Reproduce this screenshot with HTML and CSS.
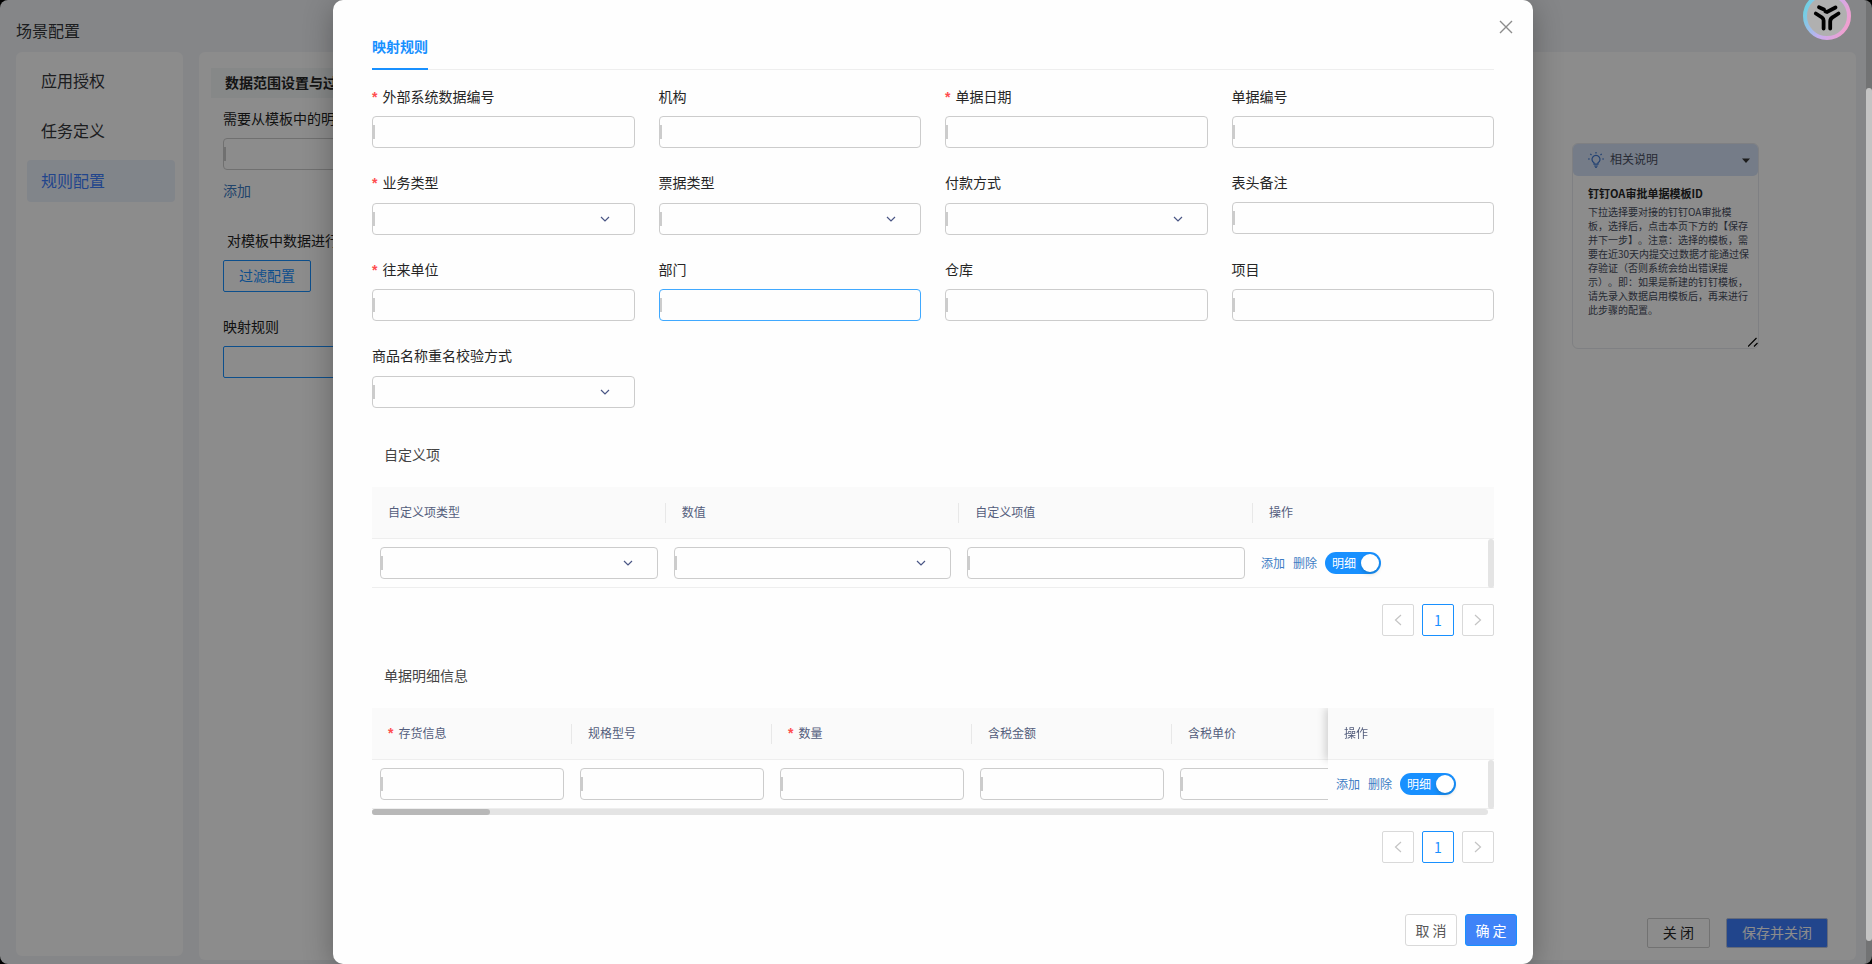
FILE: index.html
```html
<!DOCTYPE html>
<html lang="zh-CN">
<head>
<meta charset="utf-8">
<title>场景配置</title>
<link rel="stylesheet" href="styles.css">
</head>
<body>
<svg class="sprite" aria-hidden="true">
  <symbol id="down" viewBox="0 0 10 6"><path d="M1 1l4 4 4-4" fill="none" stroke="currentColor" stroke-width="1.2"/></symbol>
  <symbol id="prev" viewBox="0 0 8 12"><path d="M7 1L1.500 6 7 11" fill="none" stroke="currentColor" stroke-width="1.200"/></symbol>
  <symbol id="next" viewBox="0 0 8 12"><path d="M1 1l5.500 5L1 11" fill="none" stroke="currentColor" stroke-width="1.200"/></symbol>
</svg>

<div class="page">
  <header class="page-title">场景配置</header>
  <div class="columns">
    <nav class="sidebar">
      <a class="nav-item" href="#auth">应用授权</a>
      <a class="nav-item" href="#task">任务定义</a>
      <a class="nav-item active" href="#rule">规则配置</a>
    </nav>
    <main class="content">
      <div class="content-body">
        <section class="settings">
          <h2 class="band">数据范围设置与过</h2>
          <div class="settings-body">
            <label class="line-label" for="detail">需要从模板中的明</label>
            <input class="field" id="detail" type="text">
            <a class="link add" href="#add">添加</a>
            <p class="line-label filter-label">对模板中数据进行</p>
            <button class="outline-btn" type="button">过滤配置</button>
            <label class="line-label map-label" for="mapping">映射规则</label>
            <input class="field plain" id="mapping" type="text">
          </div>
        </section>
        <aside class="help">
          <button class="help-head" type="button">
            <svg class="bulb" viewBox="0 0 16 16" fill="none" stroke="currentColor" stroke-width="1.200"><path d="M6 12.200v-1.400a4 4 0 1 1 4 0v1.400zM6.200 14h3.600M7.200 15.300h1.600M8 0v1.500M0 7h1.800M14.200 7H16M2.300 1.800l1.200 1.200M13.700 1.800L12.500 3"/></svg>
            <span>相关说明</span>
            <svg class="caret" viewBox="0 0 8 5"><path d="M0 .5h8L4 5z" fill="currentColor"/></svg>
          </button>
          <div class="help-body">
            <h3 class="help-title">钉钉OA审批单据模板ID</h3>
            <p class="help-text">下拉选择要对接的钉钉OA审批模板，选择后，点击本页下方的【保存并下一步】。注意：选择的模板，需要在近30天内提交过数据才能通过保存验证（否则系统会给出错误提示）。即：如果是新建的钉钉模板，请先录入数据启用模板后，再来进行此步骤的配置。</p>
          </div>
          <svg class="grip" viewBox="0 0 10 10"><path d="M0 9.500L8.500 1M6 9.500L9.500 6" stroke="#000" stroke-width="1.200"/></svg>
        </aside>
      </div>
      <footer class="content-foot">
        <button class="page-btn" type="button">关 闭</button>
        <button class="page-btn save" type="button">保存并关闭</button>
      </footer>
    </main>
  </div>
</div>

<div class="overlay">
  <div class="modal" role="dialog" aria-label="映射规则">
    <button class="close" type="button" aria-label="关闭"><svg viewBox="0 0 14 14"><path d="M1 1l12 12M13 1L1 13" stroke="currentColor" stroke-width="1.400"/></svg></button>
    <div class="modal-body">
      <div class="tabs"><button class="tab" type="button">映射规则</button></div>

      <form class="form">
        <div class="item"><label class="req" for="f1">外部系统数据编号</label><input class="field" id="f1" type="text"></div>
        <div class="item"><label for="f2">机构</label><input class="field" id="f2" type="text"></div>
        <div class="item"><label class="req" for="f3">单据日期</label><input class="field" id="f3" type="text"></div>
        <div class="item"><label for="f4">单据编号</label><input class="field" id="f4" type="text"></div>
        <div class="item"><label class="req" for="f5">业务类型</label><div class="pick"><select class="field" id="f5"></select><svg class="down"><use href="#down"/></svg></div></div>
        <div class="item"><label for="f6">票据类型</label><div class="pick"><select class="field" id="f6"></select><svg class="down"><use href="#down"/></svg></div></div>
        <div class="item"><label for="f7">付款方式</label><div class="pick"><select class="field" id="f7"></select><svg class="down"><use href="#down"/></svg></div></div>
        <div class="item"><label for="f8">表头备注</label><input class="field" id="f8" type="text"></div>
        <div class="item"><label class="req" for="f9">往来单位</label><input class="field" id="f9" type="text"></div>
        <div class="item"><label for="f10">部门</label><input class="field current" id="f10" type="text"></div>
        <div class="item"><label for="f11">仓库</label><input class="field" id="f11" type="text"></div>
        <div class="item"><label for="f12">项目</label><input class="field" id="f12" type="text"></div>
        <div class="item"><label for="f13">商品名称重名校验方式</label><div class="pick"><select class="field" id="f13"></select><svg class="down"><use href="#down"/></svg></div></div>
      </form>

      <h3 class="section-title">自定义项</h3>
      <div class="table-wrap">
        <table class="grid custom">
          <colgroup><col><col><col><col class="col-custom-op"></colgroup>
          <thead><tr><th>自定义项类型</th><th>数值</th><th>自定义项值</th><th>操作</th></tr></thead>
          <tbody><tr>
            <td><div class="pick"><select class="field" aria-label="自定义项类型"></select><svg class="down"><use href="#down"/></svg></div></td>
            <td><div class="pick"><select class="field" aria-label="数值"></select><svg class="down"><use href="#down"/></svg></div></td>
            <td><input class="field" type="text" aria-label="自定义项值"></td>
            <td><div class="ops"><a class="link" href="#add">添加</a><a class="link" href="#del">删除</a><label class="switch">明细<input type="checkbox" role="switch" checked></label></div></td>
          </tr></tbody>
        </table>
        <div class="v-bar"></div>
      </div>
      <div class="pager">
        <button type="button" disabled aria-label="上一页"><svg><use href="#prev"/></svg></button>
        <button type="button" class="on">1</button>
        <button type="button" disabled aria-label="下一页"><svg><use href="#next"/></svg></button>
      </div>

      <h3 class="section-title detail-title">单据明细信息</h3>
      <div class="table-wrap">
        <table class="grid detail">
          <colgroup><col><col><col><col><col><col class="col-detail-op"></colgroup>
          <thead><tr><th><span class="req">存货信息</span></th><th>规格型号</th><th><span class="req">数量</span></th><th>含税金额</th><th>含税单价</th><th class="pinned">操作</th></tr></thead>
          <tbody><tr>
            <td><input class="field" type="text" aria-label="存货信息"></td>
            <td><input class="field" type="text" aria-label="规格型号"></td>
            <td><input class="field" type="text" aria-label="数量"></td>
            <td><input class="field" type="text" aria-label="含税金额"></td>
            <td><input class="field" type="text" aria-label="含税单价"></td>
            <td class="pinned"><div class="ops"><a class="link" href="#add">添加</a><a class="link" href="#del">删除</a><label class="switch">明细<input type="checkbox" role="switch" checked></label></div></td>
          </tr></tbody>
        </table>
        <div class="v-bar"></div>
      </div>
      <div class="h-bar"><div class="h-thumb"></div></div>
      <div class="pager">
        <button type="button" disabled aria-label="上一页"><svg><use href="#prev"/></svg></button>
        <button type="button" class="on">1</button>
        <button type="button" disabled aria-label="下一页"><svg><use href="#next"/></svg></button>
      </div>
    </div>
    <footer class="modal-foot">
      <button class="btn" type="button">取 消</button>
      <button class="btn primary" type="button">确 定</button>
    </footer>
  </div>
  <div class="scroll-track"><div class="scroll-thumb"></div></div>
</div>

<svg class="assistant" viewBox="0 0 48 48">
  <defs><linearGradient id="ring" x1="0" y1="0.300" x2="1" y2="0.700"><stop offset="0" stop-color="#6fd0e2"/><stop offset=".5" stop-color="#c6aef0"/><stop offset="1" stop-color="#f29fce"/></linearGradient></defs>
  <circle cx="24" cy="24" r="22" fill="#b0b0b0" stroke="url(#ring)" stroke-width="4"/>
  <path d="M16 15.300l5 2.200M22.500 19.500l1.500.5 8.500-4.500M12.800 21.500l6.200 4q1.700 1.200 1.600 3v8M35.500 21.500l-5.500 3.500q-2.800 1.500-2.800 4.500v7" fill="none" stroke="#000" stroke-width="3.800" stroke-linecap="round"/>
</svg>
</body>
</html>
```
FILE: styles.css
```css
* { box-sizing: border-box; }
html { background: #000; }
body {
  margin: 0;
  font: 14px/20px "Noto Sans CJK SC", "Noto Sans", sans-serif;
  color: #262626;
  text-spacing-trim: space-all;
}
h2, h3, p { margin: 0; font-weight: 400; }
button, input, select { font: inherit; color: inherit; margin: 0; }
a { text-decoration: none; }
.sprite { display: none; }

/* page behind the dialog */
.page {
  display: flex;
  flex-direction: column;
  min-height: 100vh;
  padding: 20px 16px 4px;
  background: #f2f5f8;
  border-radius: 8px;
}
.page-title { height: 32px; font-size: 16px; color: #33353a; }
.columns { flex: 1; display: flex; gap: 16px; }
.sidebar {
  display: flex;
  flex-direction: column;
  gap: 8px;
  width: 167px;
  margin-bottom: 4px;
  padding: 8px 8px 8px 11px;
  background: #fff;
  border-radius: 6px;
}
.nav-item {
  padding: 10px 14px 12px;
  font-size: 16px;
  color: #33353a;
  border-radius: 4px;
}
.nav-item.active { color: #3d7eff; background: #ecf2fc; }
.content {
  flex: 1;
  display: flex;
  flex-direction: column;
  background: #fff;
  border-radius: 6px;
}
.content-body {
  flex: 1;
  display: flex;
  justify-content: space-between;
  align-items: flex-start;
  padding: 16px 97px 0 12px;
}
.settings { width: 800px; }
.band {
  padding: 4px 14px 6px;
  font-size: 14px;
  font-weight: 700;
  background: #f5f7f7;
}
.settings-body {
  display: flex;
  flex-direction: column;
  align-items: flex-start;
  padding: 10px 12px;
}
.line-label { margin-bottom: 10px; color: #222; }
.add { margin-top: 10px; }
.filter-label { margin: 30px 0 10px 4px; }
.outline-btn {
  height: 32px;
  padding: 0 15px 2px;
  color: #1890ff;
  background: none;
  border: 1px solid #1890ff;
  border-radius: 2px;
}
.map-label { margin-top: 24px; }
.link { color: #3d7cc4; }

.help {
  position: relative;
  width: 187px;
  min-height: 206px;
  margin-top: 75px;
  border: 1px solid #e8eaee;
  border-radius: 6px;
}
.help-head {
  display: flex;
  align-items: center;
  gap: 6px;
  width: 100%;
  height: 32px;
  padding: 0 8px 0 15px;
  font-size: 12px;
  color: #474d60;
  background: #d5e2f7;
  border: 0;
  border-radius: 5px;
}
.help-head span { padding-bottom: 2px; }
.bulb { width: 16px; height: 16px; color: #3d76d0; }
.caret { width: 8px; height: 5px; margin-left: auto; color: #333; }
.help-body { padding: 8px 8px 20px 15px; }
.help-title { font-size: 11px; line-height: 18px; font-weight: 700; }
.help-text { font-size: 10px; line-height: 14px; color: #474d60; padding-top: 3px; }
.grip { position: absolute; right: 0; bottom: 1px; width: 10px; height: 10px; }
.content-foot {
  display: flex;
  justify-content: flex-end;
  gap: 16px;
  padding: 0 28px 12px;
}
.page-btn {
  height: 30px;
  padding: 0 15px 2px;
  background: #fff;
  border: 1px solid #d0d0d0;
  border-radius: 2px;
}
.page-btn.save { color: #fff; background: #3d7eff; border-color: #b8c4dc; }

/* dialog */
.overlay {
  position: absolute;
  inset: 0;
  min-height: 100vh;
  display: flex;
  justify-content: center;
  padding-right: 6px;
  background: rgba(0, 0, 0, .45);
}
.modal {
  position: relative;
  width: 1200px;
  max-width: 100%;
  min-height: 100vh;
  padding: 24px 0 18px;
  display: flex;
  flex-direction: column;
  background: #fefefe;
  border-radius: 10px;
  box-shadow: 0 6px 30px rgba(0, 0, 0, .3);
}
.modal-body { padding: 0 39px; }
.close {
  position: absolute;
  top: 16px;
  right: 16px;
  width: 22px;
  height: 22px;
  padding: 4px;
  color: #8c8c8c;
  background: none;
  border: 0;
}
.close svg { display: block; width: 14px; height: 14px; }
.tabs { height: 46px; box-shadow: inset 0 -1px #eee; }
.tab {
  height: 46px;
  padding: 0;
  font-weight: 700;
  color: #1890ff;
  background: none;
  border: 0;
  border-bottom: 2px solid #1890ff;
}
.form {
  display: grid;
  grid-template-columns: repeat(4, 1fr);
  gap: 24px;
  margin: 16px 0 36px;
}
.item { display: flex; flex-direction: column; gap: 10px; }
.item label { height: 20px; }
.item > .pick { margin-top: 1px; }
.req::before {
  content: "*";
  margin-right: 5px;
  font: 700 14px/10px "Liberation Sans", sans-serif;
  color: #ff4d4f;
}
.field {
  display: block;
  width: 100%;
  height: 32px;
  padding: 4px 11px;
  appearance: none;
  outline: 0;
  border: 1px solid #ccc;
  border-radius: 4px;
  background: linear-gradient(#ccc, #ccc) 0 9px / 3px 14px no-repeat border-box;
}
.field.current { border-color: #40a9ff; }
.field.plain { background: none; border-color: #1890ff; border-radius: 2px; }
.pick { position: relative; }
.down {
  position: absolute;
  right: 25px;
  top: 13px;
  width: 10px;
  height: 6px;
  color: #4a5685;
}
.section-title { margin-bottom: 23px; padding-left: 12px; font-size: 14px; color: #444; }
.detail-title { margin-top: 29px; }

.table-wrap { position: relative; overflow: hidden; }
.grid {
  width: 100%;
  table-layout: fixed;
  border-collapse: separate;
  border-spacing: 0;
  font-size: 12px;
}
.grid th {
  height: 52px;
  padding: 0 16px 2px;
  text-align: left;
  font-weight: 400;
  color: #535d7c;
  border-bottom: 1px solid #eee;
  background: linear-gradient(#e8e8e8, #e8e8e8) right center / 1px 20px no-repeat, #fafafa;
}
.grid th:last-child { background: #fafafa; }
.grid td { height: 49px; padding: 8px; border-bottom: 1px solid #eee; }
.col-custom-op { width: 241px; }
.detail { width: 1166px; }
.detail col { width: 200px; }
.detail .col-detail-op { width: 166px; }
.pinned { position: sticky; right: 0; background: #fefefe; }
.grid th.pinned { box-shadow: -3px 0 8px rgba(0, 0, 0, .16); }
.ops { display: flex; align-items: center; gap: 8px; }
.switch {
  display: flex;
  align-items: center;
  justify-content: space-between;
  width: 56px;
  height: 22px;
  padding: 0 2px 0 7px;
  color: #fff;
  background: #1890ff;
  border-radius: 11px;
}
.switch input {
  appearance: none;
  width: 18px;
  height: 18px;
  border-radius: 9px;
  background: #fff;
  box-shadow: 0 2px 4px rgba(0, 35, 11, .2);
}
.v-bar {
  position: absolute;
  right: 0;
  top: 52px;
  bottom: 0;
  width: 6px;
  border-radius: 3px;
  background: #e4e4e4;
}
.h-bar { height: 6px; margin-right: 6px; border-radius: 3px; background: #e4e4e4; }
.h-thumb { width: 118px; height: 6px; border-radius: 3px; background: #b8b8b8; }
.pager { display: flex; justify-content: flex-end; gap: 8px; margin-top: 16px; }
.pager button {
  width: 32px;
  height: 32px;
  padding: 0;
  color: #c4c4c4;
  background: #fff;
  border: 1px solid #d9d9d9;
  border-radius: 2px;
}
.pager button.on { color: #1890ff; border-color: #1890ff; }
.pager svg { display: block; width: 8px; height: 12px; margin: 0 auto; }
.modal-foot {
  display: flex;
  justify-content: flex-end;
  gap: 8px;
  margin-top: auto;
  padding: 48px 16px 0;
}
.btn {
  height: 32px;
  width: 52px;
  padding: 0;
  color: #595959;
  background: #fff;
  border: 1px solid #d9d9d9;
  border-radius: 3px;
}
.btn.primary { color: #fff; background: #3f83f8; border-color: #1890ff; }

.scroll-track {
  position: absolute;
  top: 0;
  right: 0;
  bottom: 0;
  width: 6px;
  padding: 88px 0 23px;
  background: rgba(0, 0, 0, .14);
}
.scroll-thumb { height: 100%; border-radius: 3px; background: #c4c4c4; }
.assistant { position: absolute; top: -8px; right: 21px; width: 48px; height: 48px; }
```
